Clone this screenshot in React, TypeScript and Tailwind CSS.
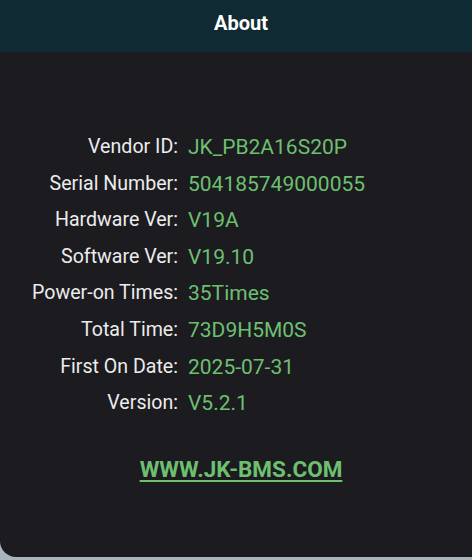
import React from "react";

const rows: [string, string][] = [
  ["Vendor ID:", "JK_PB2A16S20P"],
  ["Serial Number:", "504185749000055"],
  ["Hardware Ver:", "V19A"],
  ["Software Ver:", "V19.10"],
  ["Power-on Times:", "35Times"],
  ["Total Time:", "73D9H5M0S"],
  ["First On Date:", "2025-07-31"],
  ["Version:", "V5.2.1"],
];

export default function App() {
  return (
    <div
      className="w-[472px] h-[560px] bg-[#a9b5bd] overflow-hidden"
      style={{ fontFamily: "Roboto, 'Noto Sans', sans-serif" }}
    >
      <div className="h-[557px] bg-[#1c1b20] rounded-bl-[16px] flex flex-col overflow-hidden">
        <div className="h-[52px] bg-[#0f2a33] flex items-center justify-center pl-[10px] pb-[6px]">
          <span className="text-white text-[20px] font-bold leading-none">About</span>
        </div>
        <div className="pt-[77px] grid grid-cols-[178px_1fr] gap-x-[10px]">
          {rows.map(([k, v]) => (
            <React.Fragment key={k}>
              <div className="text-right text-[#ececec] text-[19.6px] leading-[36.6px] whitespace-nowrap">{k}</div>
              <div className="text-[#6cc070] text-[21px] leading-[36.6px] whitespace-nowrap">{v}</div>
            </React.Fragment>
          ))}
        </div>
        <div className="flex justify-center pl-[10px] mt-[36px]">
          <span className="text-[#6cc070] text-[22.5px] font-bold underline underline-offset-[3px] leading-none">
            WWW.JK-BMS.COM
          </span>
        </div>
      </div>
    </div>
  );
}
